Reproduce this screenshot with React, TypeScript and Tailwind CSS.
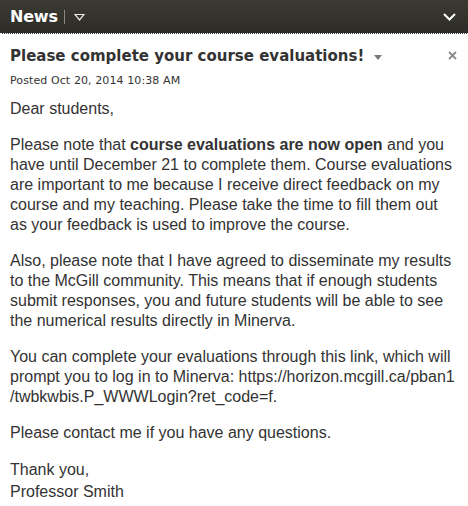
const App = () => {
  return (
    <div className="w-[468px] h-[506px] bg-white overflow-hidden">
      <div className="flex items-center justify-between h-[34px] px-[10px] bg-gradient-to-b from-[#3b3a33] to-[#2d2c26] border-b border-dotted border-white">
        <div className="flex items-center">
          <span className="text-white font-bold text-[16px] font-['DejaVu_Sans',sans-serif] tracking-[-0.2px]">
            News
          </span>
          <span className="ml-[6px] w-px h-[14px] bg-[#8a8a80]" />
          <svg className="ml-[9px]" width="11" height="8" viewBox="0 0 11 8">
            <path d="M1 1.5 H10 L5.5 7 Z" fill="none" stroke="#e6e6e6" strokeWidth="1.2" />
          </svg>
        </div>
        <svg className="mr-[2px]" width="13" height="8" viewBox="0 0 13 8">
          <path d="M1 1 L6.5 6.5 L12 1" fill="none" stroke="#ffffff" strokeWidth="2" />
        </svg>
      </div>

      <div className="px-[10px] pt-[12px] text-[#333333]">
        <div className="flex items-start justify-between">
          <div className="flex items-center">
            <h1 className="font-bold text-[15px] leading-[20px] font-['DejaVu_Sans',sans-serif] text-[#333333]">
              Please complete your course evaluations!
            </h1>
            <svg className="ml-[10px] mt-[3px]" width="8" height="5" viewBox="0 0 8 5">
              <path d="M0 0 H8 L4 5 Z" fill="#777777" />
            </svg>
          </div>
          <svg className="mt-[5px] mr-[1px]" width="9" height="9" viewBox="0 0 9 9">
            <path d="M1 1 L8 8 M8 1 L1 8" stroke="#8a8a8a" strokeWidth="1.8" />
          </svg>
        </div>
        <div className="mt-[8px] text-[11px] leading-[14px] tracking-[0.1px] font-['DejaVu_Sans',sans-serif] text-[#333333]">
          Posted Oct 20, 2014 10:38 AM
        </div>

        <div className="mt-[11px] text-[16px] leading-[20px] font-['Liberation_Sans',Arial,sans-serif] text-[#333333] flex flex-col gap-[16px]">
          <p>Dear students,</p>
          <p>
            Please note that <b>course evaluations are now open</b> and you have until December 21 to
            complete them. Course evaluations are important to me because I receive direct feedback on
            my course and my teaching. Please take the time to fill them out as your feedback is used
            to improve the course.
          </p>
          <p>
            Also, please note that I have agreed to disseminate my results to the McGill community.
            This means that if enough students submit responses, you and future students will be able
            to see the numerical results directly in Minerva.
          </p>
          <p>
            You can complete your evaluations through this link, which will prompt you to log in to
            Minerva: https://horizon.mcgill.ca/pban1
            <br />
            /twbkwbis.P_WWWLogin?ret_code=f.
          </p>
          <p>Please contact me if you have any questions.</p>
          <p className="leading-[22px]">
            Thank you,
            <br />
            Professor Smith
          </p>
        </div>
      </div>
    </div>
  );
};

export default App;
